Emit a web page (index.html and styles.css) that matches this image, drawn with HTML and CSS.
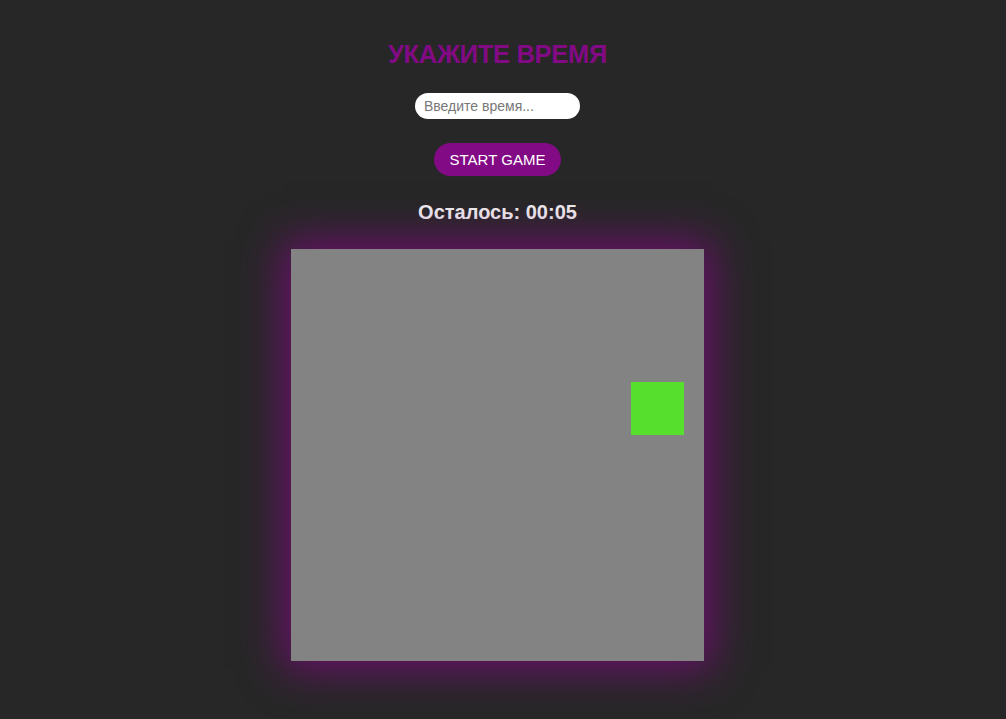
FILE: index.html
```html
<!DOCTYPE html>
<html lang="ru">
<head>
<meta charset="utf-8">
<link rel="stylesheet" href="styles.css">
</head>
<body>
<main class="app">
  <h1 class="title">УКАЖИТЕ ВРЕМЯ</h1>
  <input class="time-input" type="text" placeholder="Введите время...">
  <button class="start-btn">START GAME</button>
  <div class="timer">Осталось: 00:05</div>
  <div class="board">
    <div class="target"></div>
  </div>
</main>
</body>
</html>
```
FILE: styles.css
```css
html, body {
  margin: 0;
  padding: 0;
  background: #272727;
  height: 100%;
  overflow: hidden;
}
.app {
  display: flex;
  flex-direction: column;
  align-items: center;
  padding-top: 39px;
  padding-right: 11px;
  font-family: "Liberation Sans", Arial, sans-serif;
}
.title {
  margin: 0;
  font-size: 25.5px;
  line-height: 30px;
  font-weight: bold;
  color: #820a84;
  letter-spacing: -0.3px;
}
.time-input {
  margin-top: 24px;
  width: 165px;
  height: 26px;
  box-sizing: border-box;
  border: none;
  border-radius: 13px;
  background: #ffffff;
  padding: 0 9px;
  font-family: "Liberation Sans", Arial, sans-serif;
  font-size: 14px;
  outline: none;
}
.time-input::placeholder {
  color: #777;
}
.start-btn {
  margin-top: 24px;
  width: 127px;
  height: 33px;
  border: none;
  border-radius: 17px;
  background: #820a84;
  color: #fff;
  font-family: "Liberation Sans", Arial, sans-serif;
  font-size: 15px;
  padding: 0;
}
.timer {
  margin-top: 25px;
  font-size: 20px;
  line-height: 22px;
  font-weight: bold;
  color: #f0f0f0;
}
.board {
  margin-top: 26px;
  width: 413px;
  height: 412px;
  background: #838383;
  position: relative;
  box-shadow: 0 0 40px 8px rgba(125, 10, 125, 0.8);
}
.target {
  position: absolute;
  left: 340px;
  top: 133px;
  width: 53px;
  height: 53px;
  background: #56e02d;
}
```
